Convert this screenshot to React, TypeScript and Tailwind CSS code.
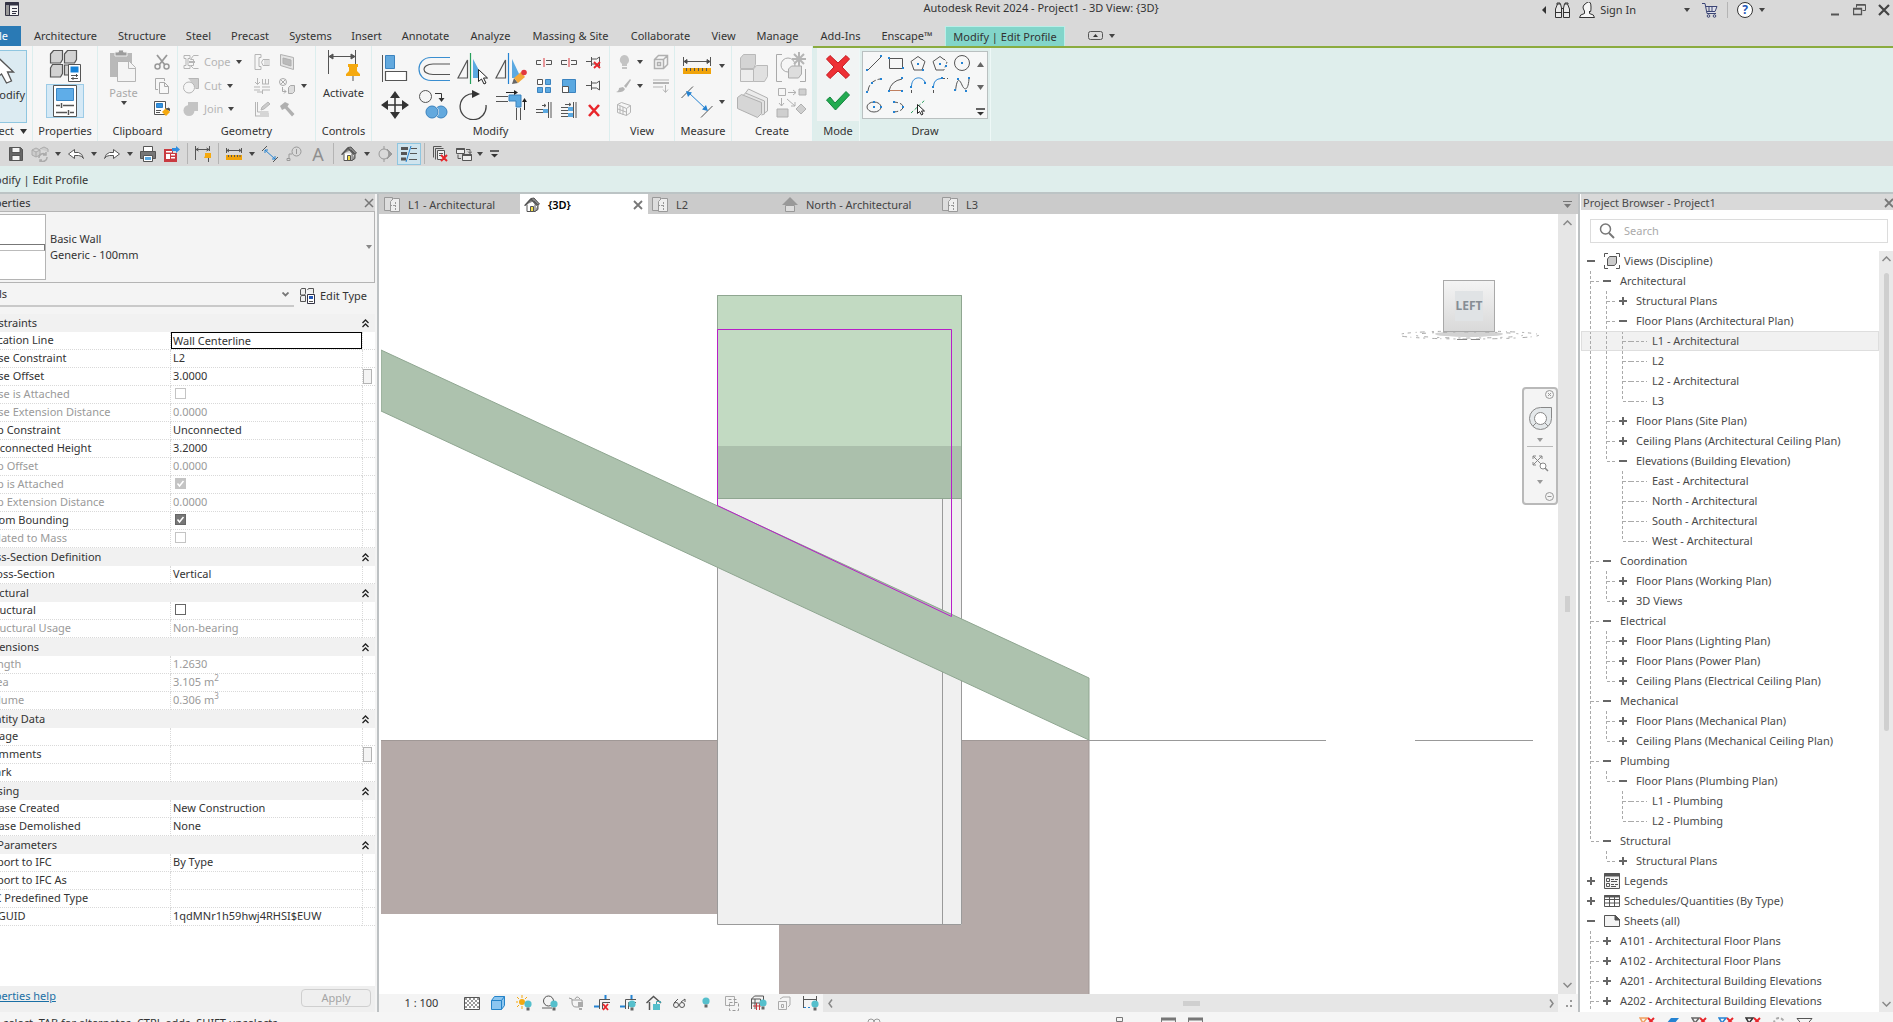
import type { ReactNode } from "react";

type IconProps = {
  w?: number;
  h?: number;
  stroke?: string;
  className?: string;
  children?: ReactNode;
};

const Svg = ({ w = 16, h = 16, stroke = "#555", className = "", children }: IconProps) => (
  <svg
    width={w}
    height={h}
    viewBox={`0 0 ${w} ${h}`}
    fill="none"
    stroke={stroke}
    className={`shrink-0 ${className}`}
    aria-hidden="true"
  >
    {children}
  </svg>
);

const Caret = ({ color = "#444" }: { color?: string }) => (
  <Svg w={6} h={4} stroke="none">
    <path d="M0 0h6L3 4z" fill={color} />
  </Svg>
);

/* ---------- shared pieces of the view control and ribbon icons ---------- */

const Bulb = ({ x = 11, y = 9 }: { x?: number; y?: number }) => (
  <g stroke="none">
    <circle cx={x} cy={y} r="3.6" fill="#55bfcc" />
    <rect x={x - 1.5} y={y + 3.5} width="3" height="3" fill="#666" />
  </g>
);

const Pin = ({ x = 0, y = 0 }: { x?: number; y?: number }) => (
  <g transform={`translate(${x} ${y})`} stroke="none">
    <path d="M1 0h10v3h-1v4l3 3v2H-1v-2l3-3V3H1z" fill="#f5a90f" />
    <path d="M5.5 12h1v5h-1z" fill="#555" />
  </g>
);

const Pencil = ({ x = 0, y = 0 }: { x?: number; y?: number }) => (
  <g transform={`translate(${x} ${y})`} stroke="none">
    <path d="M0 15l2-6 4 5z" fill="#666" />
    <path d="M2 9l7-6 4 5-7 6z" fill="#f3a83a" />
    <circle cx="12" cy="3.500" r="2.800" fill="#e2383f" />
  </g>
);

/* ---------- quick access toolbar ---------- */

const SaveIcon = () => (
  <Svg>
    <path d="M1.500 1.500h11l2 2v11h-13z" fill="#666" />
    <path d="M4 1.500h8v5H4zM4 9.500h8v5H4z" fill="#f4f4f4" />
  </Svg>
);
const SyncIcon = () => (
  <Svg w={18} stroke="#aaa">
    <path d="M1 4l4-2 4 2v5l-4 2-4-2zM1 4l4 2 4-2M5 6v5M9 3l4-2 4 2v3" fill="#ccc" />
    <path d="M8 12a4 4 0 0 1 7-3M16 11a4 4 0 0 1-7 3M15 6v3h-3M9 16v-2h2" strokeWidth="1.500" />
  </Svg>
);
const UndoIcon = () => (
  <Svg>
    <path d="M6.500 3.500v3h4q4 1 5 6-2-3-5-3h-4v3l-6-4.500z" fill="#fff" />
  </Svg>
);
const RedoIcon = () => (
  <Svg>
    <path d="M9.500 3.500v3h-4q-4 1-5 6 2-3 5-3h4v3l6-4.500z" fill="#fff" />
  </Svg>
);
const PrintIcon = () => (
  <Svg>
    <path d="M3.500.5h9v5h-9z" fill="#fff" />
    <path d="M.5 5.500h15v7H.5z" fill="#777" />
    <path d="M3.500 9.500h9v6h-9z" fill="#fff" />
    <path d="M5 11h6v3H5z" fill="#5ba9e1" stroke="none" />
  </Svg>
);
const PdfIcon = () => (
  <Svg stroke="none">
    <path d="M0 3h9v4h4v9H0z" fill="#c93a40" />
    <path d="M2 5h6v1.500H2zM2 8h4v5H2zM7 8h4v1.500H7zM7 11h4v1.500H7z" fill="#fff" />
    <path d="M8 2h4V0l4 3.500L12 7V5H8z" fill="#2f8de0" />
  </Svg>
);
const DimPinIcon = () => (
  <Svg>
    <path d="M.5 0v14M14.500 0v5M1 3.500h13M3.500 2L1 3.500 3.500 5M11.500 2L14 3.500 11.500 5" />
    <path d="M10 7h6v3l1 2h-8l1-2z" fill="#f5a90f" stroke="none" />
    <path d="M13.500 12v4" />
  </Svg>
);
const RulerIcon = () => (
  <Svg>
    <path d="M.5 2v5M15.500 2v5M1 4.500h14M3 3L1 4.500 3 6M13 3l2 1.500L13 6" />
    <path d="M0 9h16v5H0z" fill="#f0a30a" stroke="none" />
    <path d="M2.500 9v2M5.500 9v2M8.500 9v2M11.500 9v2M14 9v2" />
  </Svg>
);
const DiagDimIcon = () => (
  <Svg>
    <path d="M0 5l5-5M11 16l5-5" />
    <path d="M3 4l10 9M3 7V4h3M10 13h3v-3" stroke="#2583d2" />
  </Svg>
);
const TagIcon = () => (
  <Svg stroke="#999">
    <circle cx="10.500" cy="5.500" r="4.500" />
    <path d="M10.500 3v5M6 8H3v4M1 12.500h3v2H1z" />
  </Svg>
);
const LetterAIcon = () => <span className="text-[18px] leading-5 text-[#8f8f8f]">A</span>;
const HomeIcon = () => (
  <Svg>
    <path d="M3 7.500v7h8v-7" fill="#fff" />
    <path d="M11 14.500l3-2V7" fill="#888" />
    <path d="M.5 8.500L7 1.500l3-.5 5.500 6-1.500 1-4-4" fill="#888" />
    <path d="M1 8.500L7 2l6 6.500" strokeWidth="1.500" />
    <path d="M6.500 9.500h3v5h-3z" fill="#f4df4a" />
  </Svg>
);
const SectionIcon = () => (
  <Svg stroke="#999">
    <circle cx="7" cy="8" r="5" />
    <path d="M7 0v3M7 13v3" />
    <path d="M10 3l5 5-5 5q4-5 0-10z" fill="#999" />
  </Svg>
);
const ThinLinesIcon = () => (
  <Svg>
    <path d="M0 2.500h7M0 7.500h6M0 13h5" strokeWidth="3" />
    <path d="M10 2.500h6M9 7.500h7M8 13.500h8" />
    <path d="M10 0L5 16" stroke="#2583d2" />
  </Svg>
);
const CloseHiddenIcon = () => (
  <Svg>
    <path d="M1.500 11.500v-11h8M3.500 13.500v-11h8" />
    <path d="M5.500 4.500h7v9h-7zM7 7.500h4M7 9.500h3" fill="#f0f0f0" />
    <path d="M9 9l6 6M15 9l-6 6" stroke="#e8262b" strokeWidth="2" />
  </Svg>
);
const SwitchWindowsIcon = () => (
  <Svg>
    <path d="M.5 2.500h8v5h-8z" fill="#eee" />
    <path d="M6.500 8.500h9v6h-9z" fill="#eee" />
    <path d="M.5 3h8M6.500 9h9" strokeWidth="2" />
    <path d="M10 3.500h4v4M12 5.500l2 2 2-2M5 12.500H2v-4" />
  </Svg>
);
const CustomizeIcon = () => (
  <Svg w={9} h={8} stroke="#333">
    <path d="M0 1h9" strokeWidth="1.500" />
    <path d="M1 4h7L4.500 7.500z" fill="#333" stroke="none" />
  </Svg>
);

/* ---------- ribbon ---------- */

const PropertyTypesIcon = () => (
  <Svg w={32} h={32}>
    <path
      d="M1.500 4l3-3.500h9v9l-2 3.500h-10zM15.500 4l3-3.500h9v9l-2 3.500h-10zM1.500 18l2-3.500h10v9l-2 3.500h-10zM15.500 15h10v10h-10z"
      fill="#d2d2d2"
      strokeWidth="1.200"
    />
    <path d="M19.500 14.500h12v17h-12z" fill="#fff" />
    <path d="M21.500 16.500h8v6h-8z" fill="#1683d8" stroke="none" />
    <path d="M22 25.500h7M22 28.500h7M27.500 24v3M24 27v3" />
  </Svg>
);
const PropertiesIcon = () => (
  <Svg w={24} h={32}>
    <path d="M.5.500h23v31H.5z" fill="#fff" />
    <path d="M3.500 3.500h17v12h-17z" fill="#5fade8" stroke="#3a86c4" />
    <path d="M3 20.500h4M10 20.500h11M8.500 18v5M3 27.500h11M17 27.500h4M15.500 25v5" strokeWidth="1.500" />
  </Svg>
);
const PasteIcon = () => (
  <Svg w={28} h={32} stroke="#b5b5b5">
    <path d="M0 3h22v24H0z" fill="#b9b9b9" stroke="none" />
    <path d="M5 6V2h3.500V0h5v2H17v4z" fill="#9c9c9c" stroke="#eee" />
    <path d="M7.500 11.500h12l6 6v14h-18z" fill="#f4f4f4" />
    <path d="M18.500 11.500v7h7" />
  </Svg>
);
const CutIcon = () => (
  <Svg stroke="#999">
    <path d="M3 1l8 10M13 1L5 11" strokeWidth="1.800" />
    <circle cx="3.500" cy="12.500" r="2.500" strokeWidth="1.500" />
    <circle cx="12.500" cy="12.500" r="2.500" strokeWidth="1.500" />
  </Svg>
);
const CopyIcon = () => (
  <Svg stroke="#aaa">
    <path d="M10.500 3V.5h-9v11H4" />
    <path d="M5.500 4.500h5l4 4v7h-9zM10.500 4.500v4h4" fill="#f8f8f8" />
  </Svg>
);
const MatchIcon = () => (
  <Svg>
    <path d="M.5.500h11v13H.5z" fill="#fff" />
    <path d="M2.500 2.500h6v4h-6z" fill="#3391e0" stroke="#2a7fc6" />
    <path d="M2 9.500h5M2 11.500h4" />
    <path d="M8 11l4-4 4 4-4 4z" fill="#f5a90f" stroke="none" />
    <path d="M12 8l3-1 1 3" fill="#444" />
  </Svg>
);
const CopeIcon = () => (
  <Svg stroke="#b5b5b5">
    <path d="M1 1.500h6v3H5v7h2v3H1v-3h2v-7H1zM15.500 1.500h-5l-3 4h3v6h-3l3 3h5" />
    <path d="M6 8h6" strokeWidth="2" />
  </Svg>
);
const CutGeometryIcon = () => (
  <Svg stroke="#b5b5b5">
    <path d="M5.500.500h10v10h-3" fill="#ccc" />
    <circle cx="6" cy="9.500" r="5.500" fill="#f6f6f6" />
  </Svg>
);
const JoinIcon = () => (
  <Svg stroke="none">
    <circle cx="6" cy="9.500" r="5.500" fill="#c4c4c4" />
    <path d="M5 1h10v9H5z" fill="#c4c4c4" />
  </Svg>
);
const NotchIcon = () => (
  <Svg stroke="#b5b5b5">
    <path d="M1 .5h6v3H5v9h2v3H1zM15.500 5.500H9q-3 2.500 0 6h6.500" />
    <path d="M10 6h6v5h-6z" fill="#ddd" stroke="none" />
  </Svg>
);
const SplitFaceIcon = () => (
  <Svg stroke="#b0b0b0">
    <path d="M1.500.500l13 3v12l-13-4z" fill="#e4e4e4" />
    <path d="M4 4l8 2v6l-8-2.500z" fill="#bbb" />
  </Svg>
);
const BeamJoinIcon = () => (
  <Svg stroke="#b5b5b5">
    <path d="M3.500 0v6M1 4l2.500 2.500L6 4M8.500 1v5M11.500 1v5M14.500 1v5M8 6h7" />
    <path d="M0 9h6M8 9h8M0 12h6M8 12h8M8.500 12v4M3 14h5" />
  </Svg>
);
const PaintIcon = () => (
  <Svg stroke="#a9a9a9">
    <circle cx="4" cy="4" r="3.500" />
    <path d="M1.500 1.500l5 5M6.500 1.500l-5 5M3.500 9v4.500H7M5 11.500l2 2-2 2" />
    <path d="M9.500 9.500l2-2h4v6l-2 2h-4z" fill="#ddd" />
  </Svg>
);
const WallJoinIcon = () => (
  <Svg stroke="#b5b5b5">
    <path d="M1.500 1v14M3.500 1v10h11M1 15h14M6 13h9" />
    <path d="M7 9l1-3 6-5 2 2-6 5z" fill="#ccc" />
  </Svg>
);
const HammerIcon = () => (
  <Svg stroke="none">
    <path d="M1 5l5-4 4 2-1.500 2.500 7 7.500-2.500 2.500-7-8L3 9z" fill="#b0b0b0" />
  </Svg>
);
const ActivateIcon = () => (
  <Svg w={32} h={32}>
    <path d="M.5 0v24M27.500 0v14M1 6.500h26" />
    <path d="M5 4L1 6.500 5 9zM23 4l4 2.500L23 9z" fill="#555" />
    <Pin x={19} y={14} />
  </Svg>
);
const AlignIcon = () => (
  <Svg w={26} h={27}>
    <path d="M.5 0v27" />
    <path d="M3.500.500h9v13h-9z" fill="#63a9de" stroke="#3b83bf" />
    <path d="M3.500 16.500h21v9h-21z" fill="#fff" strokeWidth="1.200" />
  </Svg>
);
const OffsetIcon = () => (
  <Svg w={32} h={26}>
    <path d="M32 1.500H13C-3 1.500-3 24.500 13 24.500h19" stroke="#3a8ed0" strokeWidth="1.200" />
    <path d="M32 8H15C3 8 3 18.500 15 18.500h17" strokeWidth="1.200" />
  </Svg>
);
const MirrorPickIcon = () => (
  <Svg w={32} h={32}>
    <path d="M10.500 7v18H1z" strokeWidth="1.200" />
    <path d="M13.500 0v31" stroke="#27a05b" strokeWidth="1.200" />
    <path d="M16 6l8 15v4h-8z" fill="#5ba9e1" stroke="none" />
    <path d="M21.500 16.500v12l3-2.500 2.500 5 2-1-2.500-5h4z" fill="#fff" stroke="#222" />
  </Svg>
);
const MirrorDrawIcon = () => (
  <Svg w={33} h={32}>
    <path d="M10.500 7v18H1z" strokeWidth="1.200" />
    <path d="M13.500 0v31" stroke="#2583d2" strokeWidth="1.200" />
    <path d="M17 6l9 19h-9z" fill="#5ba9e1" stroke="none" />
    <Pencil x={17} y={16} />
  </Svg>
);
const MoveIcon = () => (
  <Svg w={28} h={28} stroke="#333">
    <path d="M14 4v20M4 14h20" strokeWidth="1.500" />
    <path d="M14 0l5 7H9zM14 28l5-7H9zM0 14l7-5v10zM28 14l-7-5v10z" fill="#333" stroke="none" />
  </Svg>
);
const CopyShapeIcon = () => (
  <Svg w={30} h={30}>
    <circle cx="6.500" cy="6.500" r="6" />
    <path d="M16 3.500h6.500V10" stroke="#333" />
    <path d="M19.500 8h6l-3 4z" fill="#333" stroke="none" />
    <circle cx="22" cy="22" r="6" fill="#63a9de" stroke="#3b83bf" />
    <circle cx="13" cy="22" r="6.500" fill="#63a9de" stroke="#f6f6f6" />
    <circle cx="13" cy="22" r="6" stroke="#3b83bf" />
  </Svg>
);
const RotateIcon = () => (
  <Svg w={30} h={30} stroke="#444">
    <path d="M18 4A13 13 0 1 0 28 15" strokeWidth="1.300" />
    <path d="M14 0l8 4-8 4z" fill="#333" stroke="none" />
  </Svg>
);
const TrimIcon = () => (
  <Svg w={32} h={30}>
    <path d="M0 6.500h12M0 11.500h12M20.500 18v12M24.500 18v12" />
    <path d="M13 5h12v12h-5v-6h-7z" fill="#5ba9e1" stroke="#3b83bf" />
    <path d="M10 2.500h9M28.500 20v-9" stroke="#222" />
    <path d="M18 0l4 2.500L18 5zM26 12l2.500-4 2.500 4z" fill="#222" stroke="none" />
  </Svg>
);
const SplitIcon = ({ gap = false }: { gap?: boolean }) => (
  <Svg>
    <path d={gap ? "M6 6.500H.5v4H6M10 6.500h5.500v4H10" : "M5 6.500H.5v4H5M10 6.500h5.500v4H10"} />
    <path d="M8 4v9" stroke="#d8363c" />
  </Svg>
);
const UnpinIcon = () => (
  <Svg>
    <path d="M0 7.500h5M5.500 3v9M5.500 5h5l3-2v9l-3-2h-5" />
    <path d="M8 8l6 6M14 8l-6 6" stroke="#e8262b" strokeWidth="1.800" />
  </Svg>
);
const PinSmallIcon = () => (
  <Svg>
    <path d="M0 7.500h5M5.500 3v9M5.500 5h5l3-2v9l-3-2h-5" />
  </Svg>
);
const ArrayIcon = () => (
  <Svg>
    <path d="M1.500 1.500h5v5h-5z" fill="#fff" />
    <path d="M9.500 1.500h5v5h-5zM1.500 9.500h5v5h-5zM9.500 9.500h5v5h-5z" fill="#5ba9e1" stroke="#3b83bf" />
  </Svg>
);
const ScaleIcon = () => (
  <Svg>
    <path d="M1.500 1.500h13v13h-13z" fill="#5ba9e1" stroke="#3b83bf" />
    <path d="M1.500 8.500h6v6h-6z" fill="#fff" />
  </Svg>
);
const TrimSingleIcon = () => (
  <Svg>
    <path d="M0 7.500h7M0 10.500h7M12.500 0v16M15 0v16M6 3.500h4M8 2l2 1.500L8 5" />
    <path d="M7 7h5v4H7z" fill="#5ba9e1" stroke="none" />
  </Svg>
);
const TrimMultiIcon = () => (
  <Svg>
    <path d="M0 5.500h7M0 8.500h7M0 11.500h7M0 14.500h7M12.500 0v16M15 0v16M4 2.500h6M8 1l2 1.500L8 4" />
    <path d="M7 5h5v4H7zM7 11h5v4H7z" fill="#5ba9e1" stroke="none" />
  </Svg>
);
const DeleteIcon = () => (
  <Svg stroke="#e8262b">
    <path d="M3 3l10 11M13 3L3 14" strokeWidth="2.600" />
  </Svg>
);
const BulbGrayIcon = () => (
  <Svg stroke="none">
    <path d="M8 1a5 5 0 0 1 3 9v2H6v-2a5 5 0 0 1 2-9zM6 13h5v2H6z" fill="#c4c4c4" />
  </Svg>
);
const BoxIcon = () => (
  <Svg stroke="#b0b0b0">
    <path d="M1.500 5.500l4-4h9v9l-4 4h-9zM1.500 5.500h9v9M10.500 5.500l4-4M4.500 8.500h3v3h-3z" strokeWidth="1.500" />
  </Svg>
);
const BrushIcon = () => (
  <Svg stroke="none">
    <path d="M0 14q3-1 3-4l4-1 2 2q-2 4-9 3zM8 8l6-7 1 1-5 8z" fill="#b5b5b5" />
  </Svg>
);
const LineworkIcon = () => (
  <Svg stroke="#b5b5b5">
    <path d="M0 2h16" strokeWidth="1" />
    <path d="M0 5h16" strokeWidth="2" />
    <path d="M0 9h10" strokeWidth="1" />
    <path d="M12.500 7v7M10 11.500l2.500 3 2.500-3" />
  </Svg>
);
const HatchBoxIcon = () => (
  <Svg stroke="#b5b5b5">
    <path d="M1.500 3.500l4-2 9 3v7l-4 3-9-3zM1.500 3.500l9 4 4-3M10.500 7.500v7M4 5v7M7 6v8M2 8l8 3" />
  </Svg>
);
const MeasureIcon = () => (
  <Svg w={28} h={18}>
    <path d="M.5 0v9M27.500 0v9M1 4.500h26" />
    <path d="M4 2.500L1 4.500l3 2zM24 2.500l3 2-3 2z" fill="#444" />
    <path d="M0 11h28v6H0z" fill="#f0a30a" stroke="none" />
    <path d="M3.500 11v3M7.500 11v3M11.500 11v3M15.500 11v3M19.500 11v3M23.500 11v3" />
  </Svg>
);
const DimensionIcon = () => (
  <Svg w={32} h={32}>
    <path d="M.5 12L12 .5M20 31.500L31.500 20" />
    <path d="M7 6l19 18" stroke="#2583d2" />
    <path d="M5 5l6 1.500L7 11zM27 25l-6-1.500 4-4.500z" fill="#2583d2" stroke="none" />
  </Svg>
);
const CreateGroupIcon = () => (
  <Svg w={29} h={29} stroke="#b9b9b9">
    <path d="M1.500 4l3-3.500h12v10l-2 4h-13z" fill="#d4d4d4" />
    <path d="M1.500 15.500h13v12h-13z" fill="#ececec" />
    <path d="M14.500 15l3-3.500h11v11l-3 5h-11z" fill="#e0e0e0" />
  </Svg>
);
const CreateSimilarIcon = () => (
  <Svg w={30} h={32} stroke="#aaa">
    <path d="M6 2.500H.5v27H6M24 29.500h5.500V17" />
    <circle cx="12" cy="13" r="7" />
    <path d="M12.500 17l3-3h10v8l-3 4h-10z" fill="#ddd" />
    <path d="M23 0v14M16 7h14M18 2l10 10M28 2L18 12" strokeWidth="2" stroke="#b5b5b5" />
  </Svg>
);
const AssemblyIcon = () => (
  <Svg w={32} h={30} stroke="#b0b0b0">
    <path d="M8.500 5l3-4 19 9v13l-3 2" fill="#ececec" />
    <path d="M5.500 8l3-3 19 8v13l-3 1" fill="#e4e4e4" />
    <path d="M.5 9.500l4-3 20 8v11l-4 4-20-9z" fill="#d6d6d6" />
  </Svg>
);
const PartsIcon = () => (
  <Svg w={31} h={30} stroke="#b0b0b0">
    <path d="M2.500.500h7v7h-7zM12 4.500h8M17 2l3 2.500L17 7M5.500 10v8M3 15l2.500 3L8 15M11 11l8 7M19 14v4h-4" />
    <path d="M23 1h7v6h-7zM1 21h11v8H1zM25 16l5 5-5 5-5-5z" fill="#cfcfcf" />
  </Svg>
);
const CancelIcon = () => (
  <Svg w={24} h={24} stroke="#c4191f">
    <path d="M4 .5l8 7.500L20 .5 23.500 4 16 12l7.500 8-3.500 3.500-8-7.500-8 7.500L.5 20 8 12 .5 4z" fill="#ee3035" />
  </Svg>
);
const FinishIcon = () => (
  <Svg w={24} h={20} stroke="#15843e">
    <path d="M.5 9L4 6l5 6L20 .5 23.500 4 9.500 19z" fill="#22ab50" />
  </Svg>
);

/* ---------- draw gallery ---------- */

const Dots = ({ points }: { points: [number, number][] }) => (
  <g stroke="none" fill="#2583d2">
    {points.map(([x, y]) => (
      <rect key={`${x}-${y}`} x={x - 1} y={y - 1} width="2" height="2" />
    ))}
  </g>
);

const drawTools: { name: string; icon: ReactNode }[] = [
  { name: "Line", icon: <><path d="M2 15L15 2" /><Dots points={[[1, 15], [15, 1]]} /></> },
  { name: "Rectangle", icon: <><path d="M1.500 3.500h13v10h-13z" /><Dots points={[[1, 3], [15, 13]]} /></> },
  { name: "Inscribed Polygon", icon: <><path d="M8 1.500l7 5-3 8.500H4L1 6.500z" /><Dots points={[[8, 9], [13, 15]]} /></> },
  { name: "Circumscribed Polygon", icon: <><path d="M12 15H4L1 6.500l7-5 4 3" /><path d="M12 4l3 3-3 8" strokeDasharray="2 2" /><Dots points={[[8, 9], [14, 11]]} /></> },
  { name: "Circle", icon: <><circle cx="8" cy="8" r="7.500" /><Dots points={[[8, 8]]} /></> },
  { name: "Start-End-Radius Arc", icon: <><path d="M2 14Q3 4 14 2" strokeDasharray="6 2" /><Dots points={[[1, 15], [6, 6], [15, 2]]} /></> },
  { name: "Center-ends Arc", icon: <><path d="M1 14Q3 4 14 2" /><path d="M2 13.500h12" stroke="#c08060" /><Dots points={[[1, 14], [14, 14], [14, 1]]} /></> },
  { name: "Tangent End Arc", icon: <><path d="M1.500 16v-6" strokeDasharray="3 2" /><path d="M1.500 9C2-1 12-1 15 5" stroke="#2583d2" /><Dots points={[[1, 10], [15, 6]]} /></> },
  { name: "Fillet Arc", icon: <><path d="M1.500 16v-6M10 1.500h6" strokeDasharray="3 2" /><path d="M1.500 9Q2 2 9 1.500" stroke="#2583d2" /><Dots points={[[1, 10], [10, 1]]} /></> },
  { name: "Spline", icon: <><path d="M1.500 14C3-1 6 3 8 8s6 7 7-6" /><Dots points={[[1, 13], [4, 2], [12, 14], [15, 1]]} /></> },
  { name: "Ellipse", icon: <><ellipse cx="8" cy="8" rx="7" ry="5" /><Dots points={[[8, 8], [8, 3], [15, 8]]} /></> },
  { name: "Partial Ellipse", icon: <><path d="M6 3q9 1 9 5t-9 5" strokeDasharray="4 2" /><Dots points={[[6, 3], [15, 8], [6, 13]]} /></> },
  {
    name: "Pick Lines",
    icon: (
      <>
        <path d="M1 14L15 1" stroke="#27a05b" strokeDasharray="3 2" />
        <path d="M7.500 5.500v9l2-2 2 3.500 1.500-1-1.500-3h3z" fill="#fff" stroke="#222" />
      </>
    ),
  },
];

/* ---------- layout helpers ---------- */

type ToolProps = { label: string; className?: string; children: ReactNode };

const Tool = ({ label, className = "", children }: ToolProps) => (
  <button type="button" aria-label={label} className={`flex items-center justify-center ${className}`}>
    {children}
  </button>
);

const Panel = ({ title, className = "", children }: { title: ReactNode; className?: string; children: ReactNode }) => (
  <section className={`flex h-full shrink-0 flex-col border-r border-[#dceeee] ${className}`}>
    <div className="flex min-h-0 flex-1 justify-center pt-1">{children}</div>
    <h2 className="flex h-5 items-center justify-center text-[11px]">{title}</h2>
  </section>
);

const Sep = () => (
  <span className="flex h-full w-[7px] justify-center py-[2px]">
    <span className="h-full w-px bg-[#b4b4b4]" />
  </span>
);

const tabs = [
  { name: "Architecture", width: "w-[85px]" },
  { name: "Structure", width: "w-[68px]" },
  { name: "Steel", width: "w-[45px]" },
  { name: "Precast", width: "w-[58px]" },
  { name: "Systems", width: "w-[63px]" },
  { name: "Insert", width: "w-[49px]" },
  { name: "Annotate", width: "w-[69px]" },
  { name: "Analyze", width: "w-[61px]" },
  { name: "Massing & Site", width: "w-[99px]" },
  { name: "Collaborate", width: "w-[81px]" },
  { name: "View", width: "w-[45px]" },
  { name: "Manage", width: "w-[63px]" },
  { name: "Add-Ins", width: "w-[63px]" },
  { name: "Enscape™", width: "w-[70px]" },
];

const TitleBar = () => (
  <header className="flex h-[26px] shrink-0 items-start pl-1">
    <Svg w={16} h={16} stroke="#334" className="mt-px">
      <path d="M1.500 1.500h13v13h-13z" fill="#f4f4f4" />
      <path d="M1 3h14" strokeWidth="3" />
      <path d="M5.500 4v11M8 7.500h5M8 10.500h5M8 12.500h4" />
      <path d="M2 5h3v9H2z" fill="#999" stroke="none" />
    </Svg>
    <h1 className="flex-1 pl-[520px] text-center text-[11px] leading-4">Autodesk Revit 2024 - Project1 - 3D View: {"{3D}"}</h1>
    <div className="flex h-5 items-center text-[11px]">
      <Svg w={4} h={8} stroke="none"><path d="M4 0v8L0 4z" fill="#333" /></Svg>
      <Tool label="Search" className="ml-2">
        <Svg w={17} h={16} stroke="#333">
          <path d="M1.500 15.500V7l2-5h3l1 4v9.500zM9.500 15.500V6l1-4h3l2 5v8.500zM7 6.500h3M1.500 10.500h6M9.500 10.500h6M3 2.500V1h3v1M11 2V1h3v1" fill="#e8e8e8" />
        </Svg>
      </Tool>
      <Tool label="Sign In" className="ml-2 gap-[5px]">
        <Svg w={16} h={16} stroke="#333">
          <path d="M.5 15.500q0-3 5-4V9Q4 7 4 5t4-4.500T12 5t-1.500 4v2.500q5 1 5 4z" fill="#f6f6f6" />
        </Svg>
        Sign In
      </Tool>
      <span className="ml-12"><Caret /></span>
      <Tool label="Cart" className="ml-3">
        <Svg w={16} h={16} stroke="#3a4474">
          <path d="M0 1.500h3l2 10h9M4 4.500h11l-2 5H5" fill="#dfe1ec" />
          <path d="M7 5v4M10 5v4" />
          <circle cx="6.500" cy="14" r="1.300" />
          <circle cx="12.500" cy="14" r="1.300" />
        </Svg>
      </Tool>
      <span className="mx-[9px] h-4 w-px bg-[#b4b4b4]" />
      <Tool label="Help">
        <span className="flex h-4 w-4 items-center justify-center rounded-full border border-[#333] bg-white text-[12px] font-bold leading-none text-[#2458b8]">?</span>
      </Tool>
      <span className="ml-[6px]"><Caret /></span>
      <Tool label="Minimize" className="ml-[66px]">
        <Svg w={9} h={12}><path d="M0 10.500h8" strokeWidth="2" /></Svg>
      </Tool>
      <Tool label="Restore" className="ml-[13px]">
        <Svg w={13} h={12}>
          <path d="M3.500 3.500v-3h9v6h-3" />
          <path d="M.5 4.500h8v6h-8zM0 5h9M3 1h9" strokeWidth="1.300" />
        </Svg>
      </Tool>
      <Tool label="Close" className="mr-[3px] ml-3">
        <Svg w={12} h={12} stroke="#444"><path d="M1 1l10 10M11 1L1 11" strokeWidth="2.200" /></Svg>
      </Tool>
    </div>
  </header>
);

const RibbonTabs = () => (
  <nav className="flex h-[20px] shrink-0 text-[11px]">
    <button type="button" className="w-[21px] shrink-0 overflow-hidden bg-[#2a7ab5] text-white">
      <span className="float-right pr-[13px]">File</span>
    </button>
    <span className="w-[2px]" />
    {tabs.map(({ name, width }) => (
      <button key={name} type="button" className={`shrink-0 whitespace-nowrap ${width}`}>
        {name}
      </button>
    ))}
    <span className="w-[3px]" />
    <button type="button" className="w-[120px] shrink-0 border border-b-0 border-[#b9efe8] bg-[#82d5ca]">
      Modify | Edit Profile
    </button>
    <button type="button" aria-label="Minimize ribbon" className="ml-[23px] flex items-center gap-[5px]">
      <Svg w={16} h={10}>
        <rect x=".5" y=".5" width="14" height="8" rx="2" />
        <path d="M5 6h5L7.500 3z" fill="#333" stroke="none" />
      </Svg>
      <Caret />
    </button>
  </nav>
);

const Ribbon = () => (
  <div className="flex h-[95px] shrink-0 bg-[#dfeeec]">
    <div className="flex bg-[#f6f6f6]">
      <Panel title={<span className="flex w-full items-center justify-end gap-[6px] pr-[5px]">Select <Svg w={7} h={5} stroke="none"><path d="M0 0h7L3.500 5z" fill="#333" /></Svg></span>} className="w-[33px] overflow-hidden">
        <button type="button" className="mr-auto flex h-[73px] w-[27px] flex-col items-end justify-start overflow-hidden border border-l-0 border-[#8fc6e0] bg-[#dcebf2] pt-1 text-[11px]">
          <Svg w={27} h={32}>
            <path d="M-3.500 0v24l6-5 5 9 5-2-4-9h6z" fill="#fff" strokeWidth="1.300" />
          </Svg>
          <span className="pr-px">Modify</span>
        </button>
      </Panel>
      <Panel title="Properties" className="w-[65px]">
        <div className="flex flex-col items-center gap-[2px]">
          <Tool label="Type Properties"><PropertyTypesIcon /></Tool>
          <Tool label="Properties" className="h-[34px] w-[38px] border border-[#9ccbe6] bg-[#d5e9f6]"><PropertiesIcon /></Tool>
        </div>
      </Panel>
      <Panel title="Clipboard" className="w-[80px]">
        <div className="flex gap-[14px] pl-[2px] text-[11px] text-[#a9a9a9]">
          <button type="button" className="flex w-8 flex-col items-center">
            <PasteIcon />
            <span className="pt-[3px]">Paste</span>
            <Caret />
          </button>
          <div className="flex flex-col">
            <Tool label="Cut" className="h-6"><CutIcon /></Tool>
            <Tool label="Copy" className="h-6"><CopyIcon /></Tool>
            <Tool label="Match Type" className="h-6"><MatchIcon /></Tool>
          </div>
        </div>
      </Panel>
      <Panel title="Geometry" className="w-[138px]">
        <div className="flex w-full pl-[5px] text-[11px] text-[#b5b5b5]">
          <div className="flex w-[71px] flex-col">
            <button type="button" className="flex h-6 items-center gap-[5px]"><CopeIcon />Cope <Caret /></button>
            <button type="button" className="flex h-6 items-center gap-[5px]"><CutGeometryIcon />Cut <Caret /></button>
            <button type="button" className="flex h-6 items-center gap-[5px]"><JoinIcon />Join <Caret /></button>
          </div>
          <div className="flex w-[25px] flex-col items-start">
            <Tool label="Notch" className="h-6"><NotchIcon /></Tool>
            <Tool label="Beam joins" className="h-6"><BeamJoinIcon /></Tool>
            <Tool label="Wall joins" className="h-6"><WallJoinIcon /></Tool>
          </div>
          <div className="flex flex-col items-start">
            <Tool label="Split Face" className="h-6"><SplitFaceIcon /></Tool>
            <Tool label="Paint" className="h-6 gap-[6px]"><PaintIcon /><Caret /></Tool>
            <Tool label="Demolish" className="h-6"><HammerIcon /></Tool>
          </div>
        </div>
      </Panel>
      <Panel title="Controls" className="w-[56px]">
        <button type="button" className="flex flex-col items-center text-[11px]">
          <ActivateIcon />
          <span className="pt-[3px]">Activate</span>
        </button>
      </Panel>
      <Panel title="Modify" className="w-[238px]">
        <div className="flex w-full pl-[3px]">
          <div className="grid h-[72px] w-[156px] grid-cols-4 items-center justify-items-center">
            <Tool label="Align"><AlignIcon /></Tool>
            <Tool label="Offset"><OffsetIcon /></Tool>
            <Tool label="Mirror - Pick Axis"><MirrorPickIcon /></Tool>
            <Tool label="Mirror - Draw Axis"><MirrorDrawIcon /></Tool>
            <Tool label="Move"><MoveIcon /></Tool>
            <Tool label="Copy"><CopyShapeIcon /></Tool>
            <Tool label="Rotate"><RotateIcon /></Tool>
            <Tool label="Trim/Extend to Corner"><TrimIcon /></Tool>
          </div>
          <div className="grid h-[72px] w-[76px] grid-cols-3 items-center justify-items-center">
            <Tool label="Split Element"><SplitIcon /></Tool>
            <Tool label="Split with Gap"><SplitIcon gap /></Tool>
            <Tool label="Unpin"><UnpinIcon /></Tool>
            <Tool label="Array"><ArrayIcon /></Tool>
            <Tool label="Scale"><ScaleIcon /></Tool>
            <Tool label="Pin"><PinSmallIcon /></Tool>
            <Tool label="Trim Single Element"><TrimSingleIcon /></Tool>
            <Tool label="Trim Multiple Elements"><TrimMultiIcon /></Tool>
            <Tool label="Delete"><DeleteIcon /></Tool>
          </div>
        </div>
      </Panel>
      <Panel title="View" className="w-[65px]">
        <div className="flex w-full justify-between pr-[5px] pl-[6px]">
          <div className="flex flex-col items-start">
            <Tool label="Hide" className="h-6 gap-[5px]"><BulbGrayIcon /><Caret /></Tool>
            <Tool label="Override" className="h-6 gap-[5px]"><BrushIcon /><Caret /></Tool>
            <Tool label="Selection Box" className="h-6"><HatchBoxIcon /></Tool>
          </div>
          <div className="flex flex-col">
            <Tool label="Displace" className="h-6"><BoxIcon /></Tool>
            <Tool label="Linework" className="h-6"><LineworkIcon /></Tool>
          </div>
        </div>
      </Panel>
      <Panel title="Measure" className="w-[57px]">
        <div className="flex w-full flex-col gap-1 pl-[6px]">
          <Tool label="Measure" className="h-8 justify-start gap-2 pl-[2px]"><MeasureIcon /><Caret /></Tool>
          <Tool label="Dimension" className="h-8 justify-start gap-[6px]"><DimensionIcon /><Caret /></Tool>
        </div>
      </Panel>
      <Panel title="Create" className="w-[81px]">
        <div className="grid h-[70px] w-[76px] grid-cols-2 items-center justify-items-center">
          <Tool label="Create Group"><CreateGroupIcon /></Tool>
          <Tool label="Create Similar"><CreateSimilarIcon /></Tool>
          <Tool label="Create Assembly"><AssemblyIcon /></Tool>
          <Tool label="Create Parts"><PartsIcon /></Tool>
        </div>
      </Panel>
    </div>
    <div className="flex flex-1 border-t-2 border-[#8bab3f] pl-1">
      <section className="flex w-[43px] flex-col border-r border-[#eef8f7]">
        <div className="flex flex-1 flex-col items-center justify-around bg-[#f1f4f4] pt-px pb-1">
          <Tool label="Cancel Edit Mode"><CancelIcon /></Tool>
          <Tool label="Finish Edit Mode"><FinishIcon /></Tool>
        </div>
        <h2 className="flex h-5 items-center justify-center text-[11px]">Mode</h2>
      </section>
      <section className="flex w-[131px] flex-col border-r border-[#eef8f7]">
        <div className="mx-[2px] mt-[3px] flex h-[68px] border border-[#b9c0c0] bg-[#f6f7f7]">
          <div className="grid flex-1 grid-cols-5 grid-rows-3 pl-px">
            {drawTools.map(({ name, icon }) => (
              <Tool key={name} label={name}>
                <Svg w={17} h={17}>{icon}</Svg>
              </Tool>
            ))}
          </div>
          <div className="flex w-[14px] flex-col items-center justify-between pt-[10px] pb-[2px]">
            <Svg w={7} h={5} stroke="none"><path d="M0 5h7L3.500 0z" fill="#666" /></Svg>
            <Svg w={7} h={5} stroke="none"><path d="M0 0h7L3.500 5z" fill="#666" /></Svg>
            <CustomizeIcon />
          </div>
        </div>
        <h2 className="mt-auto flex h-5 items-center justify-center text-[11px]">Draw</h2>
      </section>
    </div>
  </div>
);

const QuickAccess = () => (
  <div className="flex h-[25px] shrink-0 items-center bg-[#d9d9d9] pl-1">
    <Tool label="Save" className="w-6"><SaveIcon /></Tool>
    <Tool label="Synchronize" className="w-6"><SyncIcon /></Tool>
    <Tool label="Synchronize options" className="w-3"><Caret /></Tool>
    <Tool label="Undo" className="w-6"><UndoIcon /></Tool>
    <Tool label="Undo list" className="w-3"><Caret /></Tool>
    <Tool label="Redo" className="w-6"><RedoIcon /></Tool>
    <Tool label="Redo list" className="w-3"><Caret /></Tool>
    <Tool label="Print" className="w-6"><PrintIcon /></Tool>
    <Tool label="Export PDF" className="w-6"><PdfIcon /></Tool>
    <Sep />
    <Tool label="Activate Dimensions" className="w-6"><DimPinIcon /></Tool>
    <Sep />
    <Tool label="Measure" className="w-6"><RulerIcon /></Tool>
    <Tool label="Measure options" className="w-3"><Caret /></Tool>
    <Tool label="Aligned Dimension" className="w-6"><DiagDimIcon /></Tool>
    <Tool label="Tag by Category" className="w-6"><TagIcon /></Tool>
    <Tool label="Text" className="w-6"><LetterAIcon /></Tool>
    <Sep />
    <Tool label="Default 3D View" className="w-6"><HomeIcon /></Tool>
    <Tool label="3D View options" className="w-3"><Caret /></Tool>
    <Tool label="Section" className="w-6"><SectionIcon /></Tool>
    <Tool label="Thin Lines" className="h-[22px] w-6 border border-[#8fc6e0] bg-[#cfe4ee]"><ThinLinesIcon /></Tool>
    <Sep />
    <Tool label="Close Inactive Views" className="w-6"><CloseHiddenIcon /></Tool>
    <Tool label="Switch Windows" className="w-6"><SwitchWindowsIcon /></Tool>
    <Tool label="Window list" className="w-2"><Caret /></Tool>
    <Tool label="Customize Quick Access Toolbar" className="w-5"><CustomizeIcon /></Tool>
  </div>
);

/* ---------- properties palette ---------- */

type Row = { label: string; value?: string; sup?: string; check?: boolean; muted?: boolean; selected?: boolean; extra?: boolean };
type Group = { title: string; rows: Row[] };

const groups: Group[] = [
  {
    title: "Constraints",
    rows: [
      { label: "Location Line", value: "Wall Centerline", selected: true },
      { label: "Base Constraint", value: "L2" },
      { label: "Base Offset", value: "3.0000", extra: true },
      { label: "Base is Attached", check: false, muted: true },
      { label: "Base Extension Distance", value: "0.0000", muted: true },
      { label: "Top Constraint", value: "Unconnected" },
      { label: "Unconnected Height", value: "3.2000" },
      { label: "Top Offset", value: "0.0000", muted: true },
      { label: "Top is Attached", check: true, muted: true },
      { label: "Top Extension Distance", value: "0.0000", muted: true },
      { label: "Room Bounding", check: true },
      { label: "Related to Mass", check: false, muted: true },
    ],
  },
  { title: "Cross-Section Definition", rows: [{ label: "Cross-Section", value: "Vertical" }] },
  {
    title: "Structural",
    rows: [
      { label: "Structural", check: false },
      { label: "Structural Usage", value: "Non-bearing", muted: true },
    ],
  },
  {
    title: "Dimensions",
    rows: [
      { label: "Length", value: "1.2630", muted: true },
      { label: "Area", value: "3.105 m", sup: "2", muted: true },
      { label: "Volume", value: "0.306 m", sup: "3", muted: true },
    ],
  },
  { title: "Identity Data", rows: [{ label: "Image" }, { label: "Comments", extra: true }, { label: "Mark" }] },
  {
    title: "Phasing",
    rows: [
      { label: "Phase Created", value: "New Construction" },
      { label: "Phase Demolished", value: "None" },
    ],
  },
  {
    title: "IFC Parameters",
    rows: [
      { label: "Export to IFC", value: "By Type" },
      { label: "Export to IFC As" },
      { label: "IFC Predefined Type" },
      { label: "IfcGUID", value: "1qdMNr1h59hwj4RHSI$EUW" },
    ],
  },
];

const CheckBox = ({ label, checked, muted }: { label: string; checked: boolean; muted?: boolean }) => (
  <span className="relative ml-[2px] flex h-[11px] w-[11px]">
    <input
      type="checkbox"
      aria-label={label}
      defaultChecked={checked}
      disabled={muted}
      className="h-[11px] w-[11px] appearance-none border border-[#666] bg-white checked:bg-[#777] disabled:border-[#c4c4c4] disabled:checked:bg-[#c4c4c4]"
    />
    {checked && (
      <Svg w={11} h={11} stroke="#fff" className="pointer-events-none absolute inset-0">
        <path d="M2.500 5.500l2 2.500 4-5" strokeWidth="1.500" />
      </Svg>
    )}
  </span>
);

const PropertyGroup = ({ title, rows }: Group) => (
  <tbody>
    <tr className="h-[18px] bg-[#f1f1f1]">
      <th colSpan={2} scope="colgroup" className="p-0 pl-[2px] text-left font-normal">{title}</th>
      <td className="p-0">
        <button type="button" aria-label={`Collapse ${title}`} className="flex">
          <Svg w={7} h={9} stroke="#222"><path d="M.5 4l3-3 3 3M.5 8l3-3 3 3" strokeWidth="1.300" /></Svg>
        </button>
      </td>
    </tr>
    {rows.map(({ label, value, sup, check, muted, selected, extra }) => (
      <tr key={label} className={`h-[18px] leading-[15px] ${muted ? "text-[#9a9a9a]" : "text-[#333]"}`}>
        <th scope="row" className="border-r border-b border-dotted border-[#d9d9d9] p-0 pb-[2px] pl-[9px] text-left font-normal">{label}</th>
        <td className="border-b border-dotted border-[#d9d9d9] p-0">
          <span className={`flex h-[17px] items-center ${selected ? "border border-black pl-px" : "pb-[2px] pl-[2px]"}`}>
            {check !== undefined ? <CheckBox label={label} checked={check} muted={muted} /> : value}
            {sup && <sup className="text-[8px]">{sup}</sup>}
          </span>
        </td>
        <td className="border-b border-l border-dotted border-[#d9d9d9] p-0">
          {extra && <button type="button" aria-label={`Associate ${label}`} className="block h-[15px] w-[9px] border border-[#b4b4b4] bg-[#f4f4f4]" />}
        </td>
      </tr>
    ))}
  </tbody>
);

const PropertiesPalette = () => (
  <aside className="flex w-[379px] shrink-0 flex-col overflow-hidden border-r-2 border-[#bdc1c3] bg-[#f4f4f4] pr-[2px]">
    {/* the palette runs past the left edge of the window */}
    <div className="-ml-6 flex min-h-0 flex-1 flex-col">
      <div className="flex h-[17px] shrink-0 items-center justify-between bg-[#d9d9d9] pt-px pr-px">
        <h2 className="pl-px">Properties</h2>
        <Tool label="Close Properties"><Svg w={10} h={10} stroke="#777"><path d="M1 1l8 8M9 1L1 9" strokeWidth="1.500" /></Svg></Tool>
      </div>
      <button type="button" className="flex h-[72px] shrink-0 items-center border border-[#b4b4b4] pr-[2px] text-left">
        <span className="flex h-[66px] w-[69px] items-center border border-[#b4b4b4] bg-white">
          <span className="h-[7px] flex-1 border border-[#777] border-b-[#bbb]" />
        </span>
        <span className="flex-1 pl-1 leading-4">
          Basic Wall
          <br />
          Generic - 100mm
        </span>
        <Caret color="#888" />
      </button>
      <div className="flex h-[31px] shrink-0 items-center">
        <label className="relative flex h-6 w-[318px] items-center self-start border-b-2 border-[#c9c9c9]">
          <select aria-label="Category" className="w-full appearance-none pl-1">
            <option>Walls</option>
          </select>
          <Svg w={7} h={5} stroke="#777" className="pointer-events-none absolute right-[5px]"><path d="M.5.500l3 3 3-3" strokeWidth="1.800" /></Svg>
        </label>
        <button type="button" className="ml-[5px] flex items-center gap-[5px] pb-[5px]">
          <Svg>
            <path d="M1.500 2l1-1.500h4v5l-1 1.500h-4zM8.500 2l1-1.500h5v5M1.500 9l1-1.500h4v6h-5z" fill="#eee" />
            <path d="M8.500 6.500h7v9h-7z" fill="#fff" stroke="#334" />
            <path d="M10 8h4v3h-4z" fill="#2458b8" stroke="none" />
            <path d="M10 13.500h4" />
          </Svg>
          Edit Type
        </button>
      </div>
      <div className="min-h-0 flex-1 bg-white">
        <table className="w-full table-fixed border-separate border-spacing-0">
          <colgroup>
            <col className="w-[195px]" />
            <col />
            <col className="w-[13px]" />
          </colgroup>
          {groups.map((group) => (
            <PropertyGroup key={group.title} {...group} />
          ))}
        </table>
      </div>
      <div className="flex h-[26px] shrink-0 items-start justify-between bg-[#efefef] pt-[2px] pr-1">
        <a href="#help" className="pl-px text-[#1a6fa5] underline">Properties help</a>
        <button type="button" disabled className="mt-px h-[18px] w-[70px] rounded-sm border border-[#cfcfcf] text-[#a4a4a4]">Apply</button>
      </div>
    </div>
  </aside>
);

/* ---------- drawing area ---------- */

const SheetIcon = () => (
  <Svg w={16} h={16} stroke="#999">
    <path d="M.5.500h8v13h-8z" fill="#ddd" />
    <path d="M6.500 4.500l3-3h6v13h-9z" fill="#eee" />
    <path d="M6 8.500h5M11.500 5v9" strokeDasharray="2 1" />
  </Svg>
);
const ElevationIcon = () => (
  <Svg w={16} h={16} stroke="#999">
    <path d="M8 0l8 8H0z" fill="#999" stroke="none" />
    <path d="M3.500 8.500h9v6h-9z" fill="#ddd" />
  </Svg>
);

const ViewTabs = () => (
  <div className="flex h-5 shrink-0 bg-[#cbcbcb] pl-px text-[#444]">
    <button type="button" className="flex w-[140px] items-center gap-2 pt-[2px] pl-1"><SheetIcon />L1 - Architectural</button>
    <div className="flex w-[128px] items-center bg-white pt-[2px] pr-[5px] pl-1">
      <button type="button" className="flex flex-1 items-center gap-2 font-semibold text-black"><HomeIcon />{"{3D}"}</button>
      <Tool label="Close view"><Svg w={10} h={10} stroke="#777"><path d="M1 1l8 8M9 1L1 9" strokeWidth="1.800" /></Svg></Tool>
    </div>
    <button type="button" className="flex w-[130px] items-center gap-2 pt-[2px] pl-1"><SheetIcon />L2</button>
    <button type="button" className="flex w-[160px] items-center gap-2 pt-[2px] pl-1"><ElevationIcon />North - Architectural</button>
    <button type="button" className="flex items-center gap-2 pt-[2px] pl-1"><SheetIcon />L3</button>
    <Tool label="View list" className="mr-[6px] ml-auto">
      <Svg w={9} h={8} stroke="#777">
        <path d="M0 1.500h9" />
        <path d="M1 4h7L4.500 8z" fill="#777" stroke="none" />
      </Svg>
    </Tool>
  </div>
);

const Model = () => (
  <svg viewBox="0 0 1178 780" preserveAspectRatio="xMinYMin slice" className="h-full w-full" role="img" aria-label="Wall elevation with sloped roof">
    <path d="M0 526h336v174H0zM398 711h183V526h127v254H398z" fill="#b5aaa8" />
    <path d="M0 526.500h336M581 526.500h127V780" fill="none" stroke="#a09896" />
    <path d="M336.500 81.500h244v629h-244z" fill="#f0f0f0" stroke="#9a9a9a" />
    <path d="M337 82h243v150H337z" fill="#c2dac2" />
    <path d="M337 232h243v52H337z" fill="#abc0ac" />
    <path d="M336 284.500h245M561.500 284v426" fill="none" stroke="#9a9a9a" />
    <path d="M0 136L708 464v62L0 197z" fill="#adc2ae" stroke="#8fa691" />
    <path d="M336.500 81.500h244v203h-244z" fill="none" stroke="#8fa691" />
    <path d="M708 526.500h237M1034 526.500h118" stroke="#999" />
    <path d="M336.500 115.500h234v287L336.500 291.500z" fill="none" stroke="#b71fc8" />
  </svg>
);

const ViewCube = () => (
  <div className="absolute top-[66px] right-[17px] flex w-[144px] flex-col items-center">
    <button type="button" className="z-10 flex h-[52px] w-[52px] items-center justify-center border border-[#a9a9a9] bg-linear-to-b from-[#f4f4f4] to-[#d9d9d9] text-[12px] font-bold text-[#868d94]">
      <span className="bg-[#e0e3e5] px-px py-[7px]">LEFT</span>
    </button>
    <Svg w={144} h={12} stroke="#aaa" className="-mt-[3px]">
      <ellipse cx="72" cy="5" rx="34" ry="3" fill="#d2d2d2" stroke="none" />
      <ellipse cx="72" cy="6" rx="70" ry="4" strokeDasharray="3 5 1 3 5 7 2 4" />
      <ellipse cx="72" cy="6" rx="54" ry="3" strokeDasharray="2 9 4 6" />
      <path d="M60 10.500h10M74 10.500h9" stroke="#888" />
    </Svg>
  </div>
);

const NavBar = () => (
  <div className="absolute top-[173px] right-0 flex h-[118px] w-9 flex-col items-center rounded border-2 border-[#b9b9b9] bg-[#f4f4f4]">
    <Tool label="Close navigation bar" className="mt-px mr-[2px] self-end">
      <Svg w={9} h={9} stroke="#999"><circle cx="4.500" cy="4.500" r="4" /><path d="M3 3l3 3M6 3L3 6" /></Svg>
    </Tool>
    <Tool label="Steering Wheel" className="mt-2">
      <Svg w={23} h={23} stroke="#888">
        <path d="M11.500.500h11v11a11 11 0 1 1-11-11z" fill="#e4e8ea" />
        <circle cx="11.500" cy="11.500" r="6" fill="#fff" />
        <path d="M4 19l3-3M16 16l3 3" />
      </Svg>
    </Tool>
    <span className="mt-2"><Caret color="#999" /></span>
    <span className="mt-1 h-px w-[26px] bg-[#b9b9b9]" />
    <Tool label="Zoom" className="mt-2">
      <Svg w={17} h={17} stroke="#888">
        <path d="M1 4V1h3M7 1h3v3M1 7v3h3M1 1l9 9M10 1l-9 9" />
        <circle cx="11" cy="11" r="3" fill="#fff" />
        <path d="M13 13l3 3" strokeWidth="1.500" />
      </Svg>
    </Tool>
    <span className="mt-2"><Caret color="#999" /></span>
    <Tool label="Navigation options" className="mt-auto mr-[2px] mb-[2px] self-end">
      <Svg w={9} h={9} stroke="#999"><circle cx="4.500" cy="4.500" r="4" /><path d="M2.500 4.500h4" /></Svg>
    </Tool>
  </div>
);

const viewControls: { name: string; icon: ReactNode }[] = [
  {
    name: "Detail Level",
    icon: (
      <>
        <path d="M.5 2.500h15v12H.5z" fill="#fff" />
        <path d="M1 4h14M1 8h14M1 12h14" strokeDasharray="2 2" strokeWidth="2" stroke="#999" />
        <path d="M3 6h12M3 10h12" strokeDasharray="2 2" strokeWidth="2" stroke="#999" />
      </>
    ),
  },
  { name: "Visual Style", icon: <path d="M1.500 5.500l3-4h10v9l-3 4h-10zM1.500 5.500h10v9M11.500 5.500l3-4" fill="#8cc6f0" stroke="#2583c8" /> },
  {
    name: "Sun Path",
    icon: <><circle cx="6" cy="7" r="3" fill="#f5a90f" stroke="none" /><path d="M6 0v3M6 11v3M-1 7h3M1 2l2 2M11 2L9 4M1 12l2-2" stroke="#f5a90f" /><Bulb x={12} /></>,
  },
  { name: "Shadows", icon: <><circle cx="6.500" cy="6" r="5" /><path d="M0 13h10" strokeWidth="2" stroke="#aaa" /><Bulb x={12} /></> },
  {
    name: "Rendering",
    icon: <><path d="M1 3l3 1v3q0 5 4 5h3q4-1 3-7H4M7 4q2-4 5 0" stroke="#999" /><path d="M10 7h5v5h-5zM11 13h3v2h-3z" fill="#aaa" stroke="none" /></>,
  },
  {
    name: "Crop View",
    icon: <><path d="M5.500 14V4.500H16M8.500 14V7.500H16" /><path d="M0 11.500h5M11.500 0v4" stroke="#2583d2" strokeWidth="2" /><path d="M9 9l5 6M14 9l-5 6" stroke="#e8262b" strokeWidth="1.800" /></>,
  },
  {
    name: "Crop Region",
    icon: <><path d="M5.500 14V4.500H16M8.500 14V7.500H16" /><path d="M0 11.500h5M11.500 0v4" stroke="#2583d2" strokeWidth="2" /><Bulb x={12} /></>,
  },
  {
    name: "Lock 3D View",
    icon: <><path d="M.5 8L7.500 1.500 15 8M3.500 7v8" strokeWidth="1.500" /><path d="M7 9h7v6H7z" fill="#55bfcc" stroke="none" /><path d="M10.500 9V6.500h4V8" stroke="#3aa0ad" /></>,
  },
  { name: "Hide/Isolate", icon: <><circle cx="4" cy="10" r="2.500" /><circle cx="10" cy="10" r="2.500" /><path d="M2 8l4-4M9 7l4-3v3" /></> },
  { name: "Reveal Hidden", icon: <Bulb x={8} y={6} /> },
  { name: "Worksharing", icon: <><path d="M1.500 1.500h9v9h-9z" stroke="#aaa" /><path d="M4.500 4.500h9M5.500 7.500h9v8h-9z" stroke="#999" strokeDasharray="3 2" /></> },
  {
    name: "View Properties",
    icon: <><path d="M1.500 4l3-3h9v5M1.500 4h9v4M1.500 4v10M5 4v10M1 8h9" /><path d="M6.500 8v7M9.500 8v7M3 11h8" stroke="#c9383d" /><Bulb x={13} y={8} /></>,
  },
  { name: "Analytical Model", icon: <path d="M2.500 6.500h8v8h-8zM5.500 9.500h2v3h-2zM4 4l3-2h7v8l-2 2" stroke="#aaa" /> },
  {
    name: "Constraints",
    icon: <><path d="M1.500 1v12M14.500 1v5M2 4.500h12" /><path d="M2 12.500h8" strokeDasharray="2 2" stroke="#2583d2" /><Bulb x={13} y={9} /></>,
  },
];

const ViewControlBar = () => (
  <div className="flex h-[18px] shrink-0 items-center bg-[#f4f4f4]">
    <button type="button" className="w-[80px] pl-[5px] text-[11px]">1 : 100</button>
    {viewControls.map(({ name, icon }) => (
      <Tool key={name} label={name} className="w-[26px] shrink-0">
        <Svg w={17}>{icon}</Svg>
      </Tool>
    ))}
    <div className="flex h-full flex-1 items-center bg-[#e6e6e6] pr-1 pl-[5px]">
      <Svg w={5} h={9} stroke="#888"><path d="M4 .5l-3 4 3 4" strokeWidth="1.500" /></Svg>
      <div className="flex flex-1 justify-center">
        <span className="h-[5px] w-[17px] bg-[#cfcfcf]" />
      </div>
      <Svg w={5} h={9} stroke="#888"><path d="M1 .5l3 4-3 4" strokeWidth="1.500" /></Svg>
    </div>
    <div className="flex w-5 items-center justify-center">
      <Svg w={9} h={9} stroke="none"><path d="M6 1h2v2H6zM6 6h2v2H6zM2 6h2v2H2z" fill="#999" /></Svg>
    </div>
  </div>
);

const DrawingArea = () => (
  <main className="flex min-w-0 flex-1 flex-col bg-white">
    <ViewTabs />
    <div className="flex min-h-0 flex-1">
      <div className="relative min-w-0 flex-1 overflow-hidden pl-[2px]">
        <Model />
        <ViewCube />
        <NavBar />
      </div>
      <div className="mr-[2px] flex w-[18px] shrink-0 flex-col items-center justify-between bg-[#e6e6e6] py-[6px]">
        <Svg w={9} h={6} stroke="#888"><path d="M.5 5l4-4 4 4" strokeWidth="1.500" /></Svg>
        <span className="h-4 w-[5px] bg-[#cfcfcf]" />
        <Svg w={9} h={6} stroke="#888"><path d="M.5 1l4 4 4-4" strokeWidth="1.500" /></Svg>
      </div>
    </div>
    <ViewControlBar />
  </main>
);

/* ---------- project browser ---------- */

type TreeNode = { name: string; leaf?: boolean; active?: boolean; icon?: ReactNode; children?: TreeNode[]; more?: boolean };

const leaf = (name: string, active = false): TreeNode => ({ name, leaf: true, active });
const shut = (name: string): TreeNode => ({ name });

const tree: TreeNode[] = [
  {
    name: "Views (Discipline)",
    icon: (
      <Svg>
        <path d="M4 .5H.5V4M12 .5h3.500V4M.5 12v3.500H4M15.500 12v3.500H12" />
        <path d="M3.500 6l2-2.500h7v6.500l-2 2.500h-7z" fill="#ccc" />
      </Svg>
    ),
    children: [
      {
        name: "Architectural",
        children: [
          shut("Structural Plans"),
          {
            name: "Floor Plans (Architectural Plan)",
            children: [leaf("L1 - Architectural", true), leaf("L2"), leaf("L2 - Architectural"), leaf("L3")],
          },
          shut("Floor Plans (Site Plan)"),
          shut("Ceiling Plans (Architectural Ceiling Plan)"),
          {
            name: "Elevations (Building Elevation)",
            children: [
              leaf("East - Architectural"),
              leaf("North - Architectural"),
              leaf("South - Architectural"),
              leaf("West - Architectural"),
            ],
          },
        ],
      },
      { name: "Coordination", children: [shut("Floor Plans (Working Plan)"), shut("3D Views")] },
      {
        name: "Electrical",
        children: [shut("Floor Plans (Lighting Plan)"), shut("Floor Plans (Power Plan)"), shut("Ceiling Plans (Electrical Ceiling Plan)")],
      },
      { name: "Mechanical", children: [shut("Floor Plans (Mechanical Plan)"), shut("Ceiling Plans (Mechanical Ceiling Plan)")] },
      { name: "Plumbing", children: [{ name: "Floor Plans (Plumbing Plan)", children: [leaf("L1 - Plumbing"), leaf("L2 - Plumbing")] }] },
      { name: "Structural", children: [shut("Structural Plans")] },
    ],
  },
  {
    name: "Legends",
    icon: (
      <Svg>
        <path d="M.5.500h15v15H.5z" fill="#f4f4f4" />
        <path d="M0 2h16" strokeWidth="3" />
        <path d="M2.500 5.500h3v3h-3zM2.500 10.500h3v3h-3zM7 6.500h3M11 6.500h3M7 8.500h6M7 11.500h3M11 11.500h3M7 13.500h5" />
      </Svg>
    ),
  },
  {
    name: "Schedules/Quantities (By Type)",
    icon: (
      <Svg>
        <path d="M.5 2.500h15v11H.5zM.5 6.500h15M.5 10h15M5.500 3v10M10.500 3v10" />
        <path d="M0 3.500h16" strokeWidth="2" />
      </Svg>
    ),
  },
  {
    name: "Sheets (all)",
    more: true,
    icon: (
      <Svg>
        <path d="M.5 2.500h11l4 4v7H.5z" fill="#f4f4f4" />
        <path d="M11 2v5h5z" fill="#555" />
      </Svg>
    ),
    children: [
      shut("A101 - Architectural Floor Plans"),
      shut("A102 - Architectural Floor Plans"),
      shut("A201 - Architectural Building Elevations"),
      shut("A202 - Architectural Building Elevations"),
    ],
  },
];

const Guide = ({ d }: { d: string }) => (
  <Svg w={16} h={20} stroke="#aaa">
    <path d={d} strokeDasharray="3 2" />
  </Svg>
);

const TreeItem = ({ node, lines, last }: { node: TreeNode; lines: boolean[]; last: boolean }) => {
  const nested = lines.length > 0;
  return (
    <li>
      <div className={`flex h-5 items-center pl-[2px] ${node.active ? "bg-[#f1f1f1] outline outline-1 -outline-offset-1 outline-[#dedede]" : ""}`}>
        {lines.slice(0, -1).map((on, i) => (
          <Guide key={i} d={on ? "M7.500 0v20" : ""} />
        ))}
        {nested && <Guide d={`M7.500 0v${last ? 10 : 20}M8 10.500h8`} />}
        {node.leaf ? (
          <Guide d="M0 10.500h16" />
        ) : (
          <button type="button" aria-label={`Toggle ${node.name}`} className="flex w-4 justify-center">
            <Svg w={8} h={8} stroke="#666">
              <path d={node.children ? "M0 4h8" : "M0 4h8M4 0v8"} strokeWidth="2" />
            </Svg>
          </button>
        )}
        <a href="#view" className="flex items-center gap-1 pl-[5px] whitespace-nowrap">
          {node.icon}
          {node.name}
        </a>
      </div>
      {node.children && (
        <ul>
          {node.children.map((child, i) => {
            const isLast = !node.more && i === node.children!.length - 1;
            return <TreeItem key={child.name} node={child} lines={[...lines, !isLast]} last={isLast} />;
          })}
        </ul>
      )}
    </li>
  );
};

const ProjectBrowser = () => (
  <aside className="flex w-[315px] shrink-0 flex-col overflow-hidden border-l-2 border-[#bdc1c3] bg-white pl-px text-[#4a4a4a]">
    <div className="flex h-4 shrink-0 items-center justify-between bg-[#d9d9d9] pt-px pl-[2px]">
      <h2>Project Browser - Project1</h2>
      <Tool label="Close Project Browser"><Svg w={9} h={10} stroke="#777"><path d="M1 1l8 8M9 1L1 9" strokeWidth="1.800" /></Svg></Tool>
    </div>
    <label className="mt-[9px] mr-[5px] ml-[9px] flex h-6 shrink-0 items-center border border-[#dcdcdc] pl-2">
      <Svg stroke="#777"><circle cx="6.500" cy="6" r="5" strokeWidth="1.500" /><path d="M10 10l5 5" strokeWidth="2" /></Svg>
      <input type="search" aria-label="Search" placeholder="Search" className="min-w-0 flex-1 pl-[9px] outline-none placeholder:text-[#aaa]" />
    </label>
    <div className="mt-2 flex min-h-0 flex-1">
      <ul className="min-w-0 flex-1 overflow-hidden">
        {tree.map((node) => (
          <TreeItem key={node.name} node={node} lines={[]} last={false} />
        ))}
      </ul>
      <div className="flex w-[14px] shrink-0 flex-col items-center bg-[#e9e9e9] py-[5px]">
        <Svg w={9} h={6} stroke="#888"><path d="M.5 5l4-4 4 4" strokeWidth="1.500" /></Svg>
        <span className="mt-[11px] h-[61%] w-[5px] rounded-full bg-[#cfcfcf]" />
        <Svg w={9} h={6} stroke="#888" className="mt-auto"><path d="M.5 1l4 4 4-4" strokeWidth="1.500" /></Svg>
      </div>
    </div>
  </aside>
);

/* ---------- status bar ---------- */

const StatusBar = () => (
  <footer className="flex h-[10px] shrink-0 overflow-hidden bg-[#f5f5f5]">
    <p className="-ml-[37px] w-[904px] shrink-0 pt-[3px] whitespace-nowrap">Click to select, TAB for alternates, CTRL adds, SHIFT unselects.</p>
    <Svg w={14} h={9} stroke="#999" className="mt-[6px]"><circle cx="4" cy="4" r="3" /><circle cx="10" cy="4" r="3" /></Svg>
    <Svg w={90} h={9} stroke="#777" className="mt-[5px] ml-[235px]">
      <path d="M.5.500h6v4h-6zM3.500 4v5M45.500 1.500h14v8h-14zM72.500 1.500h14v8h-14z" />
      <path d="M45 2h15M72 2h15" strokeWidth="3" />
    </Svg>
    <div className="mt-[4px] mr-20 ml-auto flex gap-[10px]">
      {["#f0a060", "", "#666", "#2583d2", "#333"].map((color, i) =>
        color ? (
          <Svg key={i} w={17} h={12} stroke={color}>
            <path d="M1 2h7L4 7z" strokeWidth="1.500" />
            <path d="M9 2l6 6M15 2L9 8" stroke="#e8262b" strokeWidth="2" />
          </Svg>
        ) : (
          <Svg key={i} w={15} h={12} stroke="none"><path d="M0 8l5-6h8l-5 6z" fill="#2583d2" /></Svg>
        ),
      )}
      <Svg w={14} h={12} stroke="#aaa"><circle cx="7" cy="7" r="5" strokeWidth="2" strokeDasharray="3 2" /></Svg>
      <Svg w={17} h={12}><path d="M1 2.500h15l-5 6H6z" /></Svg>
    </div>
  </footer>
);

const App = () => (
  <div className="flex h-screen flex-col overflow-hidden bg-[#d9d9d9] font-['Noto_Sans','Open_Sans',sans-serif] text-[11px] leading-4 text-[#333]">
    <TitleBar />
    <RibbonTabs />
    <Ribbon />
    <QuickAccess />
    <div className="flex h-[26px] shrink-0 items-center bg-[#dfeeec]">
      <h2 className="-ml-[15px] pt-px">Modify | Edit Profile</h2>
    </div>
    <div className="flex min-h-0 flex-1 border-t-2 border-[#bcc4c5]">
      <PropertiesPalette />
      <DrawingArea />
      <ProjectBrowser />
    </div>
    <StatusBar />
  </div>
);

export default App;
